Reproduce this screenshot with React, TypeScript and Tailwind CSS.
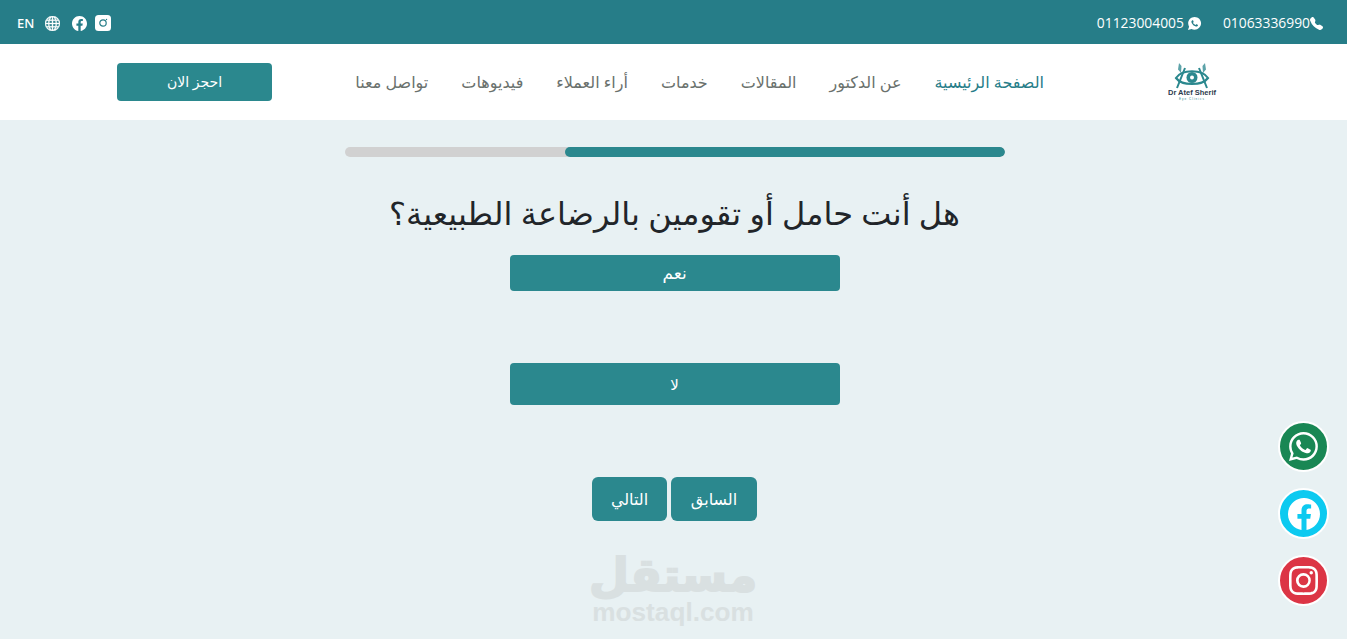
import { BsFacebook, BsGlobe, BsInstagram, BsTelephoneFill, BsWhatsapp } from 'react-icons/bs'
import { IoLogoWhatsapp } from 'react-icons/io'

const font = "font-['Noto_Sans','DejaVu_Sans',sans-serif]"

const navItems = ['الصفحة الرئيسية', 'عن الدكتور', 'المقالات', 'خدمات', 'أراء العملاء', 'فيديوهات', 'تواصل معنا']

const Logo = () => (
	<div className="flex w-[50px] flex-col items-center">
		<svg width="38" height="26" viewBox="0 0 38 26" fill="none">
			<path d="M6 0 L8.5 3 L8 10 L5 6.5 Z" fill="#5da3a9" />
			<path d="M32 0 L29.5 3 L30 10 L33 6.5 Z" fill="#5da3a9" />
			<path d="M3 15 C9 6 29 6 35 15 C29 23 9 23 3 15 Z" stroke="#2b888e" strokeWidth="2.2" />
			<path d="M12 5 L4 25 M26 5 L34 25" stroke="#2b888e" strokeWidth="2" />
			<circle cx="19" cy="14.5" r="5.5" fill="#2b888e" />
			<circle cx="19" cy="14.5" r="2" fill="#fff" />
		</svg>
		<span className="font-['Liberation_Sans',sans-serif] text-[7.5px] leading-[8px] font-bold whitespace-nowrap text-[#2d3b4e]">Dr Atef Sherif</span>
		<span className="font-['Liberation_Sans',sans-serif] text-[3px] leading-[4px] tracking-[1px] text-[#2b888e]">Eye Clinics</span>
	</div>
)

const App = () => {
	return (
		<div dir="rtl" className={`relative flex h-[639px] w-full flex-col overflow-hidden bg-[#e8f1f3] ${font}`}>
			<header dir="ltr" className="flex h-11 items-center justify-between bg-[#267d88] pt-[2px] pr-6 pl-[17px] text-white">
				<div className="flex items-center">
					<span className="mr-[11px] text-[13px] leading-4 font-medium">EN</span>
					<BsGlobe size={15} stroke="currentColor" strokeWidth={0.4} />
					<BsFacebook size={15} className="ml-[12px]" />
					<svg width="16" height="16" viewBox="0 0 16 16" className="ml-2">
						<rect width="16" height="16" rx="3.5" fill="#fff" />
						<circle cx="8" cy="8" r="3.2" fill="none" stroke="#267d88" strokeWidth="1.2" />
						<circle cx="11.5" cy="4.5" r="0.7" fill="#267d88" />
					</svg>
				</div>
				<div className="flex items-center gap-[21px] font-['Open_Sans',sans-serif] text-[13.85px] leading-4">
					<div className="flex items-center gap-[3px]">
						<span>01123004005</span>
						<IoLogoWhatsapp size={15} />
					</div>
					<div className="flex items-center">
						<span>01063336990</span>
						<BsTelephoneFill size={13} />
					</div>
				</div>
			</header>
			<div className="flex h-[76px] items-center bg-white pr-[130px] pl-[117px]">
				<Logo />
				<nav className="mr-[123px] flex items-center gap-[33px] text-base text-[#6a716d]">
					{
						navItems.map((item, index) => (
							<a key={index} className={index === 0 ? 'text-[#267d88]' : ''}>{item}</a>
						))
					}
				</nav>
				<button className="mr-auto h-[38px] w-[155px] rounded bg-[#2b888e] text-sm text-white">احجز الان</button>
			</div>
			<main className="flex flex-col items-center pl-[2px]">
				<div className="mt-[27px] flex h-[10px] w-[660px] overflow-hidden rounded-full bg-[#d1d1d1]">
					<div className="h-full w-[440px] rounded-full bg-[#2b888e]"></div>
				</div>
				<h1 className="mt-[35px] text-[32px] leading-[42px] text-[#212529]">هل أنت حامل أو تقومين بالرضاعة الطبيعية؟</h1>
				<button className="mt-[21px] h-9 w-[330px] rounded bg-[#2b888e] text-[17px] text-white">نعم</button>
				<button className="mt-[72px] h-[42px] w-[330px] rounded bg-[#2b888e] text-[15px] text-white">لا</button>
				<div className="mt-[72px] flex gap-1">
					<button className="h-11 w-[86px] rounded-md bg-[#2b888e] text-base text-white">السابق</button>
					<button className="h-11 w-[75px] rounded-md bg-[#2b888e] text-base text-white">التالي</button>
				</div>
				<div className="mt-[28px] flex flex-col items-center text-[#d9e0e1]">
					<span className="mr-[3px] text-[46px] leading-[48px] font-bold [-webkit-text-stroke:2px_#d9e0e1]">مستقل</span>
					<span dir="ltr" className="mt-[3px] mr-[3px] font-['Liberation_Sans',sans-serif] text-[26.2px] leading-6 font-bold">mostaql.com</span>
				</div>
			</main>
			<div className="absolute top-[421px] right-[18px] flex flex-col gap-4 text-white">
				<a className="flex size-[51px] items-center justify-center rounded-full border-[2px] border-white bg-[#198754]"><BsWhatsapp size={29} /></a>
				<a className="flex size-[51px] items-center justify-center rounded-full border-[2px] border-white bg-[#0dcaf0]"><BsFacebook size={32} /></a>
				<a className="flex size-[51px] items-center justify-center rounded-full border-[2px] border-white bg-[#dc3545]"><BsInstagram size={29} /></a>
			</div>
		</div>
	)
}

export default App
